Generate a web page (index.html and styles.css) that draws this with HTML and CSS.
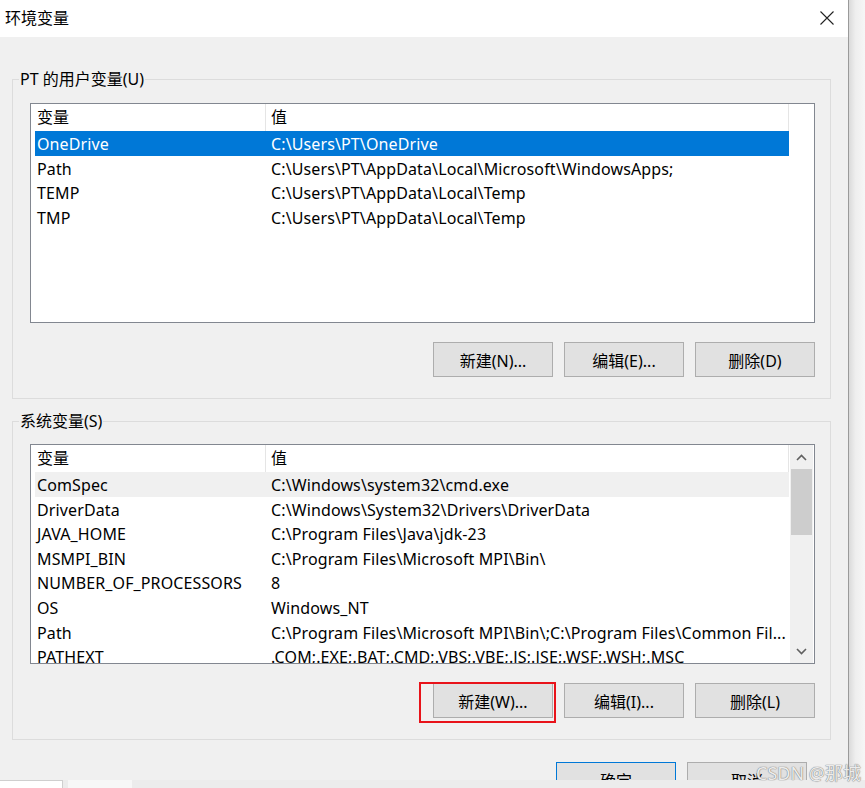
FILE: index.html
```html
<!DOCTYPE html>
<html lang="zh-CN">
<head>
  <meta charset="UTF-8" />
  <title>环境变量</title>
  <link rel="stylesheet" href="styles.css">
</head>
<body>
  <div class="screen">
    <div class="window">
      <div class="titlebar">
        <span class="title">环境变量</span>
        <svg class="close" width="14" height="14" viewBox="0 0 14 14">
          <path d="M0.5 0.5 L13.5 13.5 M13.5 0.5 L0.5 13.5" stroke="#222" stroke-width="1.1" fill="none"/>
        </svg>
      </div>

      <div class="content">
        <fieldset class="group">
          <legend>PT 的用户变量(U)</legend>
          <div class="list">
            <div class="list-body">
              <div class="list-head">
                <div class="hcell name">变量</div>
                <div class="hcell value">值</div>
              </div>
              <div class="row selected"><div class="cell name">OneDrive</div><div class="cell value">C:\Users\PT\OneDrive</div></div>
              <div class="row"><div class="cell name">Path</div><div class="cell value">C:\Users\PT\AppData\Local\Microsoft\WindowsApps;</div></div>
              <div class="row"><div class="cell name">TEMP</div><div class="cell value">C:\Users\PT\AppData\Local\Temp</div></div>
              <div class="row"><div class="cell name">TMP</div><div class="cell value">C:\Users\PT\AppData\Local\Temp</div></div>
            </div>
          </div>
          <div class="actions">
            <button class="btn">新建(N)...</button>
            <button class="btn">编辑(E)...</button>
            <button class="btn">删除(D)</button>
          </div>
        </fieldset>

        <fieldset class="group system">
          <legend>系统变量(S)</legend>
          <div class="list">
            <div class="list-body">
              <div class="list-head">
                <div class="hcell name">变量</div>
                <div class="hcell value">值</div>
              </div>
              <div class="row hover"><div class="cell name">ComSpec</div><div class="cell value">C:\Windows\system32\cmd.exe</div></div>
              <div class="row"><div class="cell name">DriverData</div><div class="cell value">C:\Windows\System32\Drivers\DriverData</div></div>
              <div class="row"><div class="cell name">JAVA_HOME</div><div class="cell value">C:\Program Files\Java\jdk-23</div></div>
              <div class="row"><div class="cell name">MSMPI_BIN</div><div class="cell value">C:\Program Files\Microsoft MPI\Bin\</div></div>
              <div class="row"><div class="cell name">NUMBER_OF_PROCESSORS</div><div class="cell value">8</div></div>
              <div class="row"><div class="cell name">OS</div><div class="cell value">Windows_NT</div></div>
              <div class="row"><div class="cell name">Path</div><div class="cell value">C:\Program Files\Microsoft MPI\Bin\;C:\Program Files\Common Fil...</div></div>
              <div class="row"><div class="cell name">PATHEXT</div><div class="cell value">.COM;.EXE;.BAT;.CMD;.VBS;.VBE;.JS;.JSE;.WSF;.WSH;.MSC</div></div>
            </div>
            <div class="scrollbar">
              <div class="arrow">
                <svg width="11" height="7" viewBox="0 0 11 7"><path d="M1 6 L5.5 1.5 L10 6" stroke="#606060" stroke-width="1.6" fill="none"/></svg>
              </div>
              <div class="thumb"></div>
              <div class="track"></div>
              <div class="arrow">
                <svg width="11" height="7" viewBox="0 0 11 7"><path d="M1 1 L5.5 5.5 L10 1" stroke="#606060" stroke-width="1.6" fill="none"/></svg>
              </div>
            </div>
          </div>
          <div class="actions">
            <div class="marked">
              <button class="btn">新建(W)...</button>
              <span class="mark"></span>
            </div>
            <button class="btn">编辑(I)...</button>
            <button class="btn">删除(L)</button>
          </div>
        </fieldset>

        <div class="dialog-actions">
          <button class="btn default">确定</button>
          <button class="btn">取消</button>
        </div>
      </div>
    </div>
    <div class="shadow"></div>
  </div>

  <div class="taskbar">
    <div class="tab"></div>
    <div class="tab light"></div>
    <div class="rest"></div>
  </div>

  <div class="watermark">CSDN @那城</div>
</body>
</html>
```

FILE: styles.css
```css
* {
  box-sizing: border-box;
}

body {
  margin: 0;
  width: 865px;
  height: 788px;
  overflow: hidden;
  position: relative;
  background: #f0f0f0;
  font-family: "Noto Sans", "Noto Sans CJK SC", sans-serif;
  font-size: 16px;
  color: #000;
}

.screen {
  display: flex;
  height: 780px;
}

.window {
  width: 849px;
  height: 780px;
  border-right: 1px solid #9a9a9a;
  overflow: hidden;
  background: #f0f0f0;
}

.shadow {
  flex: 1;
  background: linear-gradient(to right, #dadada, #eeeeee 40%, #f6f6f6);
}

.titlebar {
  height: 37px;
  background: #fff;
  display: flex;
  align-items: center;
  justify-content: space-between;
  padding: 0 14px 2px 5px;
}

.title {
  font-size: 16px;
  line-height: 20px;
}

.content {
  padding: 32px 17px 0 12px;
}

.group {
  margin: 0;
  width: 819px;
  border: 1px solid #dcdcdc;
  padding: 0 15px 21px 6px;
}

.group.system {
  margin-top: 12px;
}

.group legend {
  padding: 0 1px;
  font-size: 16px;
  line-height: 20px;
}

.list {
  margin: 14px 0 0 11px;
  width: 785px;
  height: 220px;
  border: 1px solid #828790;
  background: #fff;
  display: flex;
  overflow: hidden;
}

.system .list {
  margin-top: 13px;
}

.list-body {
  width: 758px;
  overflow: hidden;
}

.list-head {
  display: flex;
  height: 27px;
  line-height: 27px;
}

.hcell {
  border-right: 1px solid #e5e5e5;
  white-space: nowrap;
}

.hcell.name {
  width: 235px;
  padding-left: 6px;
}

.hcell.value {
  width: 523px;
  padding-left: 5px;
}

.row {
  display: flex;
  margin-left: 4px;
  width: 754px;
  height: 24.6px;
}

.row.selected {
  background: #0078d7;
  color: #fff;
}

.row.hover {
  background: #f0f0f0;
}

.cell {
  white-space: nowrap;
  overflow: hidden;
  padding-top: 3px;
  line-height: 21.6px;
  letter-spacing: 0.12px;
}

.cell.name {
  width: 234px;
  padding-left: 2px;
}

.cell.value {
  flex: 1;
  padding-left: 2px;
}

.scrollbar {
  width: 23px;
  margin-left: 1px;
  background: #f0f0f0;
  display: flex;
  flex-direction: column;
}

.arrow {
  height: 24px;
  display: flex;
  align-items: center;
  justify-content: center;
}

.thumb {
  height: 66px;
  margin: 0 1px;
  background: #cdcdcd;
}

.track {
  flex: 1;
}

.actions {
  display: flex;
  justify-content: flex-end;
  gap: 11px;
  margin-top: 19px;
  margin-left: 11px;
}

.btn {
  width: 120px;
  height: 35px;
  border: 1px solid #adadad;
  background: #e1e1e1;
  font-family: inherit;
  font-size: 16px;
  color: #000;
  padding: 0;
}

.btn.default {
  border-color: #0078d7;
}

.marked {
  position: relative;
  display: flex;
}

.mark {
  position: absolute;
  left: -14px;
  top: -1px;
  right: -3px;
  bottom: -5px;
  border: 2px solid #e8131a;
}

.dialog-actions {
  display: flex;
  justify-content: flex-end;
  gap: 11px;
  margin-top: 22px;
  padding-right: 24px;
}

.taskbar {
  height: 8px;
  display: flex;
  background: #ececec;
}

.tab {
  width: 63px;
  background: #fff;
  border-top: 1px solid #cfcfcf;
  border-right: 1px solid #cfcfcf;
}

.tab.light {
  margin-left: 5px;
  width: 64px;
  border: none;
  background: #f7f7f7;
}

.rest {
  flex: 1;
}

.watermark {
  position: absolute;
  right: 4px;
  bottom: 5px;
  font-size: 18px;
  line-height: 20px;
  color: #ececec;
  text-shadow: 0 0 1px #7a7a7a, 0 0 1px #7a7a7a;
}
```
